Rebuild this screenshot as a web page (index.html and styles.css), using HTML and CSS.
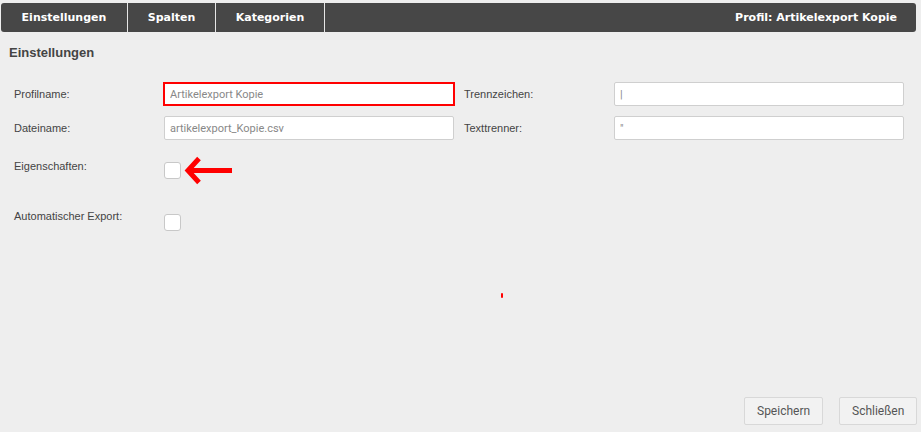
FILE: index.html
```html
<!DOCTYPE html>
<html lang="de">
<head>
<meta charset="utf-8">
<title>Profil: Artikelexport Kopie</title>
<link rel="stylesheet" href="styles.css">
</head>
<body>
<div class="page">
  <nav class="tabbar">
    <a class="tab tab-first">Einstellungen</a>
    <a class="tab tab-second">Spalten</a>
    <a class="tab tab-third">Kategorien</a>
    <span class="tab-spacer"></span>
    <span class="profile">Profil: Artikelexport Kopie</span>
  </nav>
  <h2 class="section-title">Einstellungen</h2>
  <div class="form">
    <div class="row">
      <label class="label">Profilname:</label>
      <input class="field invalid" type="text" value="Artikelexport Kopie">
      <label class="label label-right">Trennzeichen:</label>
      <input class="field" type="text" value="|">
    </div>
    <div class="row">
      <label class="label">Dateiname:</label>
      <input class="field" type="text" value="artikelexport_Kopie.csv">
      <label class="label label-right">Texttrenner:</label>
      <input class="field" type="text" value="&quot;">
    </div>
    <div class="row row-check row-props">
      <label class="label">Eigenschaften:</label>
      <span class="checkbox"></span>
      <svg class="arrow" width="52" height="31" viewBox="0 0 52 31">
        <path d="M50 15.5 H6" stroke="#f00" stroke-width="5" fill="none"/>
        <path d="M17 3.5 L6 15.5 L17 27.5" stroke="#f00" stroke-width="5" fill="none" stroke-linejoin="miter"/>
      </svg>
    </div>
    <div class="row row-check row-auto">
      <label class="label">Automatischer Export:</label>
      <span class="checkbox"></span>
    </div>
  </div>
  <span class="speck"></span>
  <div class="footer">
    <button class="btn">Speichern</button>
    <button class="btn">Schließen</button>
  </div>
</div>
</body>
</html>
```
FILE: styles.css
```css
html, body {
  margin: 0;
  padding: 0;
  background: #eeeeee;
}
.page {
  position: relative;
  height: 432px;
  display: flex;
  flex-direction: column;
  font-family: "Liberation Sans", Arial, sans-serif;
}
.tabbar {
  margin: 3px 5px 0 1px;
  height: 29px;
  background: #474747;
  border-radius: 3px;
  display: flex;
  align-items: stretch;
  font-family: "DejaVu Sans", sans-serif;
  font-weight: bold;
  font-size: 11px;
  color: #fff;
}
.tab {
  display: flex;
  align-items: center;
  justify-content: center;
  border-right: 1px solid #e6e6e6;
  box-sizing: border-box;
}
.tab-first { width: 127px; }
.tab-second { width: 88px; }
.tab-third { width: 109px; }
.tab-spacer { flex: 1; }
.profile {
  display: flex;
  align-items: center;
  padding-right: 19px;
}
.section-title {
  margin: 13px 0 0 9px;
  font-size: 13px;
  font-weight: bold;
  color: #444;
  line-height: 15px;
}
.form {
  margin-top: 22px;
  padding-left: 14px;
}
.row {
  display: flex;
  align-items: center;
  height: 24px;
  margin-bottom: 10px;
}
.label {
  width: 150px;
  font-size: 11px;
  color: #444;
}
.label-right {
  width: 150px;
  margin-left: 10px;
}
.field {
  width: 290px;
  height: 24px;
  box-sizing: border-box;
  border: 1px solid #cfcfcf;
  border-radius: 2px;
  background: #fff;
  padding: 0 5px;
  font-family: Roboto, sans-serif;
  font-size: 11px;
  color: #888;
  outline: none;
}
.field.invalid {
  border: 1px solid #f00;
  box-shadow: 0 0 0 1px #f00;
  border-radius: 0;
  height: 22px;
}
.row-check {
  align-items: flex-start;
  height: 17px;
}
.row-props {
  margin-top: 22px;
  margin-bottom: 0;
}
.row-props .label { margin-top: -2px; }
.row-auto {
  margin-top: 35px;
}
.row-auto .label { margin-top: -4px; }
.checkbox {
  width: 17px;
  height: 17px;
  box-sizing: border-box;
  border: 1px solid #c8c8c8;
  border-radius: 3px;
  background: #fff;
  flex: none;
}
.arrow {
  margin: -7px 0 0 1px;
  flex: none;
}
.speck {
  position: absolute;
  left: 501px;
  top: 293px;
  width: 2px;
  height: 5px;
  background: #f00;
  border-radius: 1px;
}
.footer {
  margin-top: auto;
  margin-bottom: 7px;
  margin-right: 4px;
  display: flex;
  justify-content: flex-end;
  gap: 16px;
}
.btn {
  height: 28px;
  padding: 0 12px;
  background: #f2f2f2;
  border: 1px solid #d8d8d8;
  border-radius: 2px;
  font-family: Roboto, sans-serif;
  font-size: 12px;
  color: #555;
}
.btn:first-child { width: 79px; }
.btn:last-child { width: 78px; }
```
